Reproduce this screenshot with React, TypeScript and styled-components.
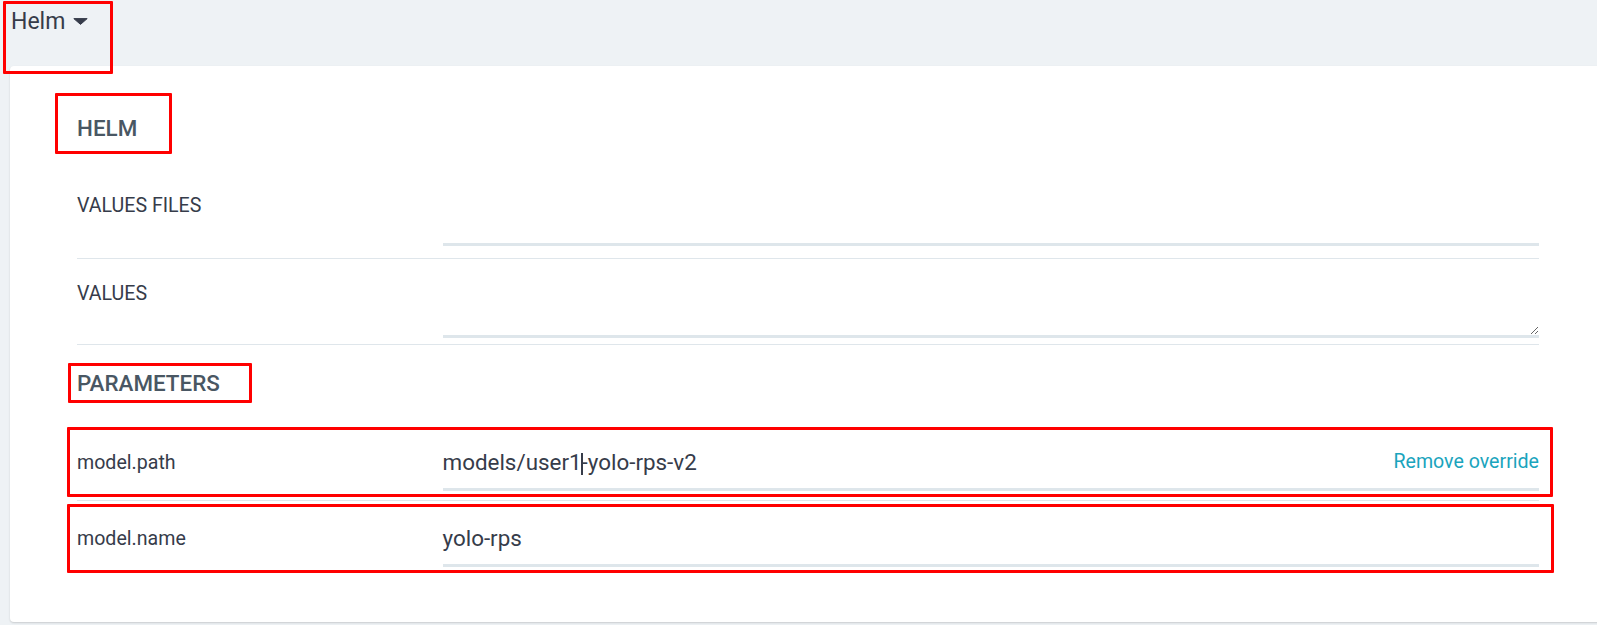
import React from 'react';
import styled, { createGlobalStyle } from 'styled-components';

const FONT = `Roboto, "Liberation Sans", Arial, sans-serif`;

const GlobalStyle = createGlobalStyle`
  * { box-sizing: border-box; }
  html, body { margin: 0; padding: 0; background: #eef2f5; overflow: hidden; }
  body { font-family: ${FONT}; color: #363c4a; }
  #root { width: 1597px; height: 625px; overflow: hidden; }
`;

const Page = styled.div`
  position: relative;
  width: 1597px;
  height: 625px;
  overflow: hidden;
  background: #eef2f5;
`;

const TopBar = styled.header`
  height: 66px;
  padding: 8px 0 0 11px;
  display: flex;
  align-items: flex-start;
`;

const TitleButton = styled.button`
  display: flex;
  align-items: center;
  gap: 8px;
  padding: 0;
  border: 0;
  background: none;
  cursor: pointer;
  font-family: ${FONT};
  font-size: 23px;
  font-weight: 400;
  line-height: 27px;
  color: #363c4a;
`;

const Card = styled.section`
  margin: 0 -9px 0 10px;
  height: 556px;
  padding: 47px 67px 0;
  background: #ffffff;
  border-radius: 4px;
  box-shadow: 0 1px 2px rgba(0, 0, 0, 0.16);
`;

const SectionTitle = styled.h2<{ $top: number; $bottom: number }>`
  margin: ${(p) => p.$top}px 0 ${(p) => p.$bottom}px;
  font-family: ${FONT};
  font-size: 22.4px;
  font-weight: 500;
  line-height: 30px;
  color: #495763;
  text-transform: uppercase;
`;

const FieldRow = styled.div<{ $pt: number; $pb: number; $center?: boolean; $last?: boolean }>`
  display: grid;
  grid-template-columns: 1fr 3fr;
  align-items: ${(p) => (p.$center ? 'center' : 'start')};
  padding: ${(p) => p.$pt}px 0 ${(p) => p.$pb}px;
  border-bottom: ${(p) => (p.$last ? 'none' : '1px solid #dfe6eb')};
`;

const Label = styled.label`
  font-family: ${FONT};
  font-size: 19.6px;
  font-weight: 400;
  line-height: 24px;
  color: #363c4a;
`;

const TextInput = styled.input`
  display: block;
  width: 100%;
  height: 52px;
  padding: 0;
  border: 0;
  border-bottom: 3px solid #dee6eb;
  outline: none;
  background: transparent;
  font-family: ${FONT};
  font-size: 22.4px;
  color: #363c4a;
`;

const TextArea = styled.textarea`
  display: block;
  width: 100%;
  height: 56px;
  padding: 0;
  border: 0;
  border-bottom: 3px solid #dee6eb;
  outline: none;
  background: transparent;
  resize: vertical;
  font-family: ${FONT};
  font-size: 22.4px;
  color: #363c4a;
`;

const ValueField = styled.div`
  display: flex;
  align-items: center;
  height: 56px;
  border-bottom: 3px solid #dee6eb;
`;

const ValueText = styled.span`
  flex: 1;
  font-family: ${FONT};
  font-size: 22.4px;
  font-weight: 400;
  line-height: 30px;
  color: #363c4a;
  white-space: nowrap;
`;

const TextCaret = styled.span`
  display: inline-block;
  width: 2px;
  height: 22px;
  margin: 0 -1px;
  background: #363c4a;
  vertical-align: -5px;
`;

const RemoveLink = styled.button`
  padding: 0;
  border: 0;
  background: none;
  cursor: pointer;
  font-family: ${FONT};
  font-size: 19.6px;
  font-weight: 400;
  line-height: 24px;
  color: #1aa4bd;
`;

const Annotation = styled.div<{ $x: number; $y: number; $w: number; $h: number }>`
  position: absolute;
  left: ${(p) => p.$x}px;
  top: ${(p) => p.$y}px;
  width: ${(p) => p.$w}px;
  height: ${(p) => p.$h}px;
  border: 3px solid #ff0000;
  border-radius: 1px;
  pointer-events: none;
`;

const CaretDown = () => (
  <svg width="15" height="7" viewBox="0 0 15 7" aria-hidden="true">
    <polygon
      points="0.8,0.6 14.2,0.6 7.5,6.4"
      fill="#363c4a"
      stroke="#363c4a"
      strokeWidth="1"
      strokeLinejoin="round"
    />
  </svg>
);

const annotations = [
  { x: 3, y: 1, w: 110, h: 73 },
  { x: 55, y: 93, w: 117, h: 61 },
  { x: 68, y: 363, w: 184, h: 40 },
  { x: 67, y: 427, w: 1486, h: 70 },
  { x: 67, y: 504, w: 1487, h: 69 },
];

export default function App() {
  return (
    <>
      <GlobalStyle />
      <Page>
        <TopBar>
          <TitleButton type="button">
            Helm
            <CaretDown />
          </TitleButton>
        </TopBar>
        <Card>
          <SectionTitle $top={0} $bottom={28}>Helm</SectionTitle>
          <FieldRow $pt={23} $pb={12}>
            <Label>VALUES FILES</Label>
            <TextInput type="text" />
          </FieldRow>
          <FieldRow $pt={23} $pb={6}>
            <Label>VALUES</Label>
            <TextArea />
          </FieldRow>
          <SectionTitle $top={23} $bottom={27}>Parameters</SectionTitle>
          <FieldRow $pt={10} $pb={9} $center>
            <Label>model.path</Label>
            <ValueField>
              <ValueText>
                models/user1
                <TextCaret />
                -yolo-rps-v2
              </ValueText>
              <RemoveLink type="button">Remove override</RemoveLink>
            </ValueField>
          </FieldRow>
          <FieldRow $pt={10} $pb={9} $center $last>
            <Label>model.name</Label>
            <ValueField>
              <ValueText>yolo-rps</ValueText>
            </ValueField>
          </FieldRow>
        </Card>
        {annotations.map((a, i) => (
          <Annotation key={i} $x={a.x} $y={a.y} $w={a.w} $h={a.h} />
        ))}
      </Page>
    </>
  );
}
